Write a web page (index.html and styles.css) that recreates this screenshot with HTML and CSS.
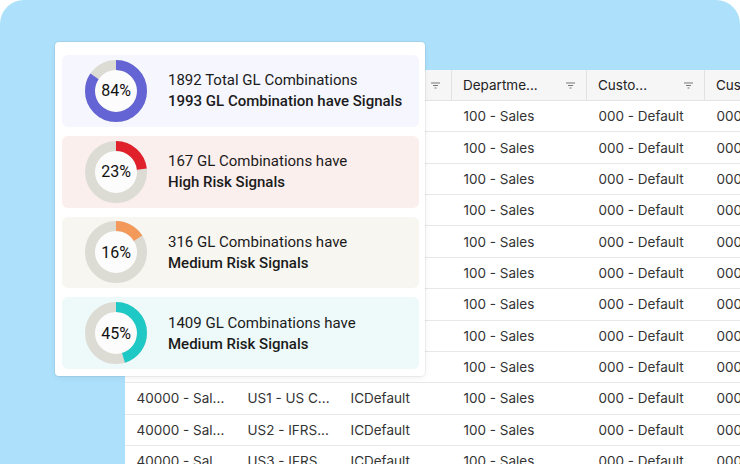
FILE: index.html
```html
<!DOCTYPE html>
<html>
<head>
<meta charset="utf-8">
<link rel="stylesheet" href="styles.css">
</head>
<body>
<div class="panel">
  <div class="table">
    <div class="row head">
      <div class="hc"><span>Account</span><svg class="flt" viewBox="0 0 9 7"><path d="M0 1h9M2 3.5h5M3.5 6h2" stroke="#777" stroke-width="1.1"/></svg></div>
      <div class="hc"><span>Ledger</span><svg class="flt" viewBox="0 0 9 7"><path d="M0 1h9M2 3.5h5M3.5 6h2" stroke="#777" stroke-width="1.1"/></svg></div>
      <div class="hc"><span>Interco</span><svg class="flt" viewBox="0 0 9 7"><path d="M0 1h9M2 3.5h5M3.5 6h2" stroke="#777" stroke-width="1.1"/></svg></div>
      <div class="hc"><span>Departme...</span><svg class="flt" viewBox="0 0 9 7"><path d="M0 1h9M2 3.5h5M3.5 6h2" stroke="#777" stroke-width="1.1"/></svg></div>
      <div class="hc"><span>Custo...</span><svg class="flt" viewBox="0 0 9 7"><path d="M0 1h9M2 3.5h5M3.5 6h2" stroke="#777" stroke-width="1.1"/></svg></div>
      <div class="hc"><span>Cust...</span></div>
    </div>
    <div class="row"><div class="c">40000 - Sal...</div><div class="c">US1 - US C...</div><div class="c">ICDefault</div><div class="c">100 - Sales</div><div class="c">000 - Default</div><div class="c">000 - Default</div></div>
    <div class="row"><div class="c">40000 - Sal...</div><div class="c">US2 - IFRS...</div><div class="c">ICDefault</div><div class="c">100 - Sales</div><div class="c">000 - Default</div><div class="c">000 - Default</div></div>
    <div class="row"><div class="c">40000 - Sal...</div><div class="c">US3 - IFRS...</div><div class="c">ICDefault</div><div class="c">100 - Sales</div><div class="c">000 - Default</div><div class="c">000 - Default</div></div>
    <div class="row"><div class="c">40000 - Sal...</div><div class="c">US1 - US C...</div><div class="c">ICDefault</div><div class="c">100 - Sales</div><div class="c">000 - Default</div><div class="c">000 - Default</div></div>
    <div class="row"><div class="c">40000 - Sal...</div><div class="c">US2 - IFRS...</div><div class="c">ICDefault</div><div class="c">100 - Sales</div><div class="c">000 - Default</div><div class="c">000 - Default</div></div>
    <div class="row"><div class="c">40000 - Sal...</div><div class="c">US3 - IFRS...</div><div class="c">ICDefault</div><div class="c">100 - Sales</div><div class="c">000 - Default</div><div class="c">000 - Default</div></div>
    <div class="row"><div class="c">40000 - Sal...</div><div class="c">US1 - US C...</div><div class="c">ICDefault</div><div class="c">100 - Sales</div><div class="c">000 - Default</div><div class="c">000 - Default</div></div>
    <div class="row"><div class="c">40000 - Sal...</div><div class="c">US2 - IFRS...</div><div class="c">ICDefault</div><div class="c">100 - Sales</div><div class="c">000 - Default</div><div class="c">000 - Default</div></div>
    <div class="row"><div class="c">40000 - Sal...</div><div class="c">US3 - IFRS...</div><div class="c">ICDefault</div><div class="c">100 - Sales</div><div class="c">000 - Default</div><div class="c">000 - Default</div></div>
    <div class="row"><div class="c">40000 - Sal...</div><div class="c">US1 - US C...</div><div class="c">ICDefault</div><div class="c">100 - Sales</div><div class="c">000 - Default</div><div class="c">000 - Default</div></div>
    <div class="row"><div class="c">40000 - Sal...</div><div class="c">US2 - IFRS...</div><div class="c">ICDefault</div><div class="c">100 - Sales</div><div class="c">000 - Default</div><div class="c">000 - Default</div></div>
    <div class="row"><div class="c">40000 - Sal...</div><div class="c">US3 - IFRS...</div><div class="c">ICDefault</div><div class="c">100 - Sales</div><div class="c">000 - Default</div><div class="c">000 - Default</div></div>
  </div>

  <div class="card">
    <div class="item purple">
      <div class="donut">
        <svg viewBox="0 0 62 62"><circle cx="31" cy="31" r="26" class="track"/><circle cx="31" cy="31" r="26" class="arc" stroke="#6464d4" stroke-dasharray="137.2 163.4"/></svg>
        <span class="pct">84%</span>
      </div>
      <div class="txt"><div class="l1">1892 Total GL Combinations</div><div class="l2">1993 GL Combination have Signals</div></div>
    </div>
    <div class="item red">
      <div class="donut">
        <svg viewBox="0 0 62 62"><circle cx="31" cy="31" r="26" class="track"/><circle cx="31" cy="31" r="26" class="arc" stroke="#e0212b" stroke-dasharray="37.6 163.4"/></svg>
        <span class="pct">23%</span>
      </div>
      <div class="txt"><div class="l1">167 GL Combinations have</div><div class="l2">High Risk Signals</div></div>
    </div>
    <div class="item beige">
      <div class="donut">
        <svg viewBox="0 0 62 62"><circle cx="31" cy="31" r="26" class="track"/><circle cx="31" cy="31" r="26" class="arc" stroke="#f3995a" stroke-dasharray="26.1 163.4"/></svg>
        <span class="pct">16%</span>
      </div>
      <div class="txt"><div class="l1">316 GL Combinations have</div><div class="l2">Medium Risk Signals</div></div>
    </div>
    <div class="item teal">
      <div class="donut">
        <svg viewBox="0 0 62 62"><circle cx="31" cy="31" r="26" class="track"/><circle cx="31" cy="31" r="26" class="arc" stroke="#1ec9c5" stroke-dasharray="73.5 163.4"/></svg>
        <span class="pct">45%</span>
      </div>
      <div class="txt"><div class="l1">1409 GL Combinations have</div><div class="l2">Medium Risk Signals</div></div>
    </div>
  </div>
</div>
</body>
</html>
```
FILE: styles.css
```css
* { box-sizing: border-box; }
html, body { margin: 0; padding: 0; background: #ffffff; }
body { width: 740px; height: 464px; overflow: hidden; }

.panel {
  position: relative;
  height: 464px;
  background: #ade1fb;
  border-radius: 24px 24px 0 0;
  overflow: hidden;
  padding: 70px 0 0 125px;
}

.table {
  width: 700px;
  background: #ffffff;
  font-family: Inter, "Liberation Sans", sans-serif;
  font-size: 13.5px;
  color: #333333;
}
.row {
  display: grid;
  grid-template-columns: 111px 103px 113px 135px 118px 120px;
  height: 31.36px;
  border-bottom: 1px solid #e8e8e8;
}
.row.head {
  height: 31px;
  background: #f6f6f6;
  border-bottom: 1px solid #e4e4e4;
  color: #222;
}
.hc {
  display: flex;
  align-items: center;
  justify-content: space-between;
  padding: 0 11px 0 11px;
  border-right: 1px solid #e2e2e2;
}
.flt { width: 9px; height: 7px; }
.c {
  display: flex;
  align-items: center;
  padding: 0 11px 0 11.5px;
  white-space: nowrap;
  overflow: hidden;
}

.card {
  position: absolute;
  left: 55px;
  top: 42px;
  width: 370px;
  height: 334px;
  background: #ffffff;
  border-radius: 4px;
  box-shadow: 0 0 0 1px rgba(0,0,0,0.05), 0 2px 6px rgba(0,0,0,0.06);
  padding: 13px 6px 7px 7px;
  display: flex;
  flex-direction: column;
  gap: 9px;
  font-family: Roboto, "Liberation Sans", sans-serif;
  color: #1b1b1b;
}
.item {
  height: 72px;
  border-radius: 6px;
  display: flex;
  align-items: center;
  padding-left: 23px;
  gap: 21px;
}
.purple { background: #f5f6fe; }
.red { background: #fbefee; }
.beige { background: #f8f6f1; }
.teal { background: #eef9f9; }

.donut {
  position: relative;
  width: 62px;
  height: 62px;
  flex: none;
}
.donut svg { width: 62px; height: 62px; display: block; transform: rotate(-90deg); }
.track { fill: #fcfcfc; stroke: #dcdcd5; stroke-width: 10; }
.arc { fill: none; stroke-width: 10; }
.pct {
  position: absolute;
  inset: 0;
  display: flex;
  align-items: center;
  justify-content: center;
  font-size: 16px;
  color: #111;
}
.txt { font-size: 15px; line-height: 21px; }
.l1 { margin-top: 1px; }
.l2 { font-weight: 500; }
```
